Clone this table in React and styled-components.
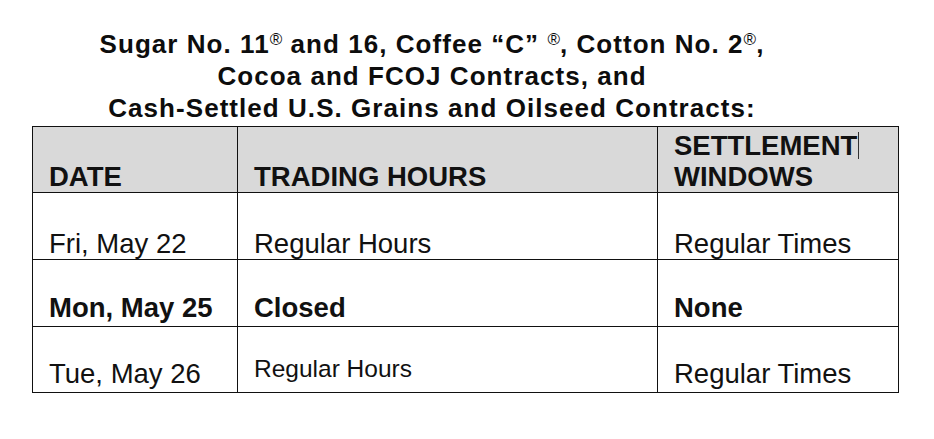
import styled, { createGlobalStyle } from "styled-components";

const GlobalStyle = createGlobalStyle`
  html, body {
    margin: 0;
    padding: 0;
    background: #ffffff;
  }
  body {
    font-family: "Liberation Sans", Arial, sans-serif;
    color: #111;
  }
`;

const Page = styled.div`
  width: 934px;
  height: 439px;
  padding-top: 28px;
  box-sizing: border-box;
  background: #fff;
`;

const Title = styled.h1`
  margin: 0 70px 2px 0;
  text-align: center;
  font-size: 26px;
  line-height: 32px;
  font-weight: 700;
  letter-spacing: 1.05px;
  color: #0d0d0d;
`;

const TitleLine = styled.div`
  white-space: nowrap;
`;

const Reg = styled.sup`
  font-size: 17px;
  font-weight: 400;
  line-height: 0;
  vertical-align: 0.5em;
  letter-spacing: 0;
  margin-left: ${(p) => (p.$gap ? "6px" : "0")};
`;

const Table = styled.table`
  margin-left: 32px;
  width: 866px;
  border-collapse: collapse;
  table-layout: fixed;
  font-size: 27.5px;
  color: #111;
`;

const HeadRow = styled.tr`
  height: 66px;
  background: #d9d9d9;
`;

const Row = styled.tr`
  height: ${(p) => p.$h}px;
`;

const HeadCell = styled.th`
  border: 1px solid #111;
  padding: 0 0 0 16px;
  text-align: left;
  vertical-align: bottom;
  font-weight: 700;
  line-height: 31px;
`;

const Cell = styled.td`
  border: 1px solid #111;
  padding: 0 0 ${(p) => p.$pb || 0}px 16px;
  vertical-align: bottom;
  font-weight: ${(p) => (p.$bold ? 700 : 400)};
  font-size: ${(p) => p.$size || 27.5}px;
  line-height: 31px;
  white-space: nowrap;
`;

const Caret = styled.span`
  display: inline-block;
  width: 1px;
  height: 27px;
  margin-left: 1px;
  background: #333;
  vertical-align: -4px;
`;

const rows = [
  { h: 67, date: "Fri, May 22", hours: "Regular Hours", windows: "Regular Times", pb: 0 },
  { h: 67, date: "Mon, May 25", hours: "Closed", windows: "None", pb: 3, bold: true },
  { h: 66, date: "Tue, May 26", hours: "Regular Hours", windows: "Regular Times", pb: 3, hoursSize: 24.5, hoursPb: 8 },
];

export default function App() {
  return (
    <Page>
      <GlobalStyle />
      <Title>
        <TitleLine>
          Sugar No. 11<Reg>®</Reg> and 16, Coffee “C” <Reg>®</Reg>, Cotton No. 2<Reg>®</Reg>,
        </TitleLine>
        <TitleLine>Cocoa and FCOJ Contracts, and</TitleLine>
        <TitleLine>Cash-Settled U.S. Grains and Oilseed Contracts:</TitleLine>
      </Title>
      <Table>
        <colgroup>
          <col style={{ width: 205 }} />
          <col style={{ width: 420 }} />
          <col style={{ width: 241 }} />
        </colgroup>
        <thead>
          <HeadRow>
            <HeadCell>DATE</HeadCell>
            <HeadCell>TRADING HOURS</HeadCell>
            <HeadCell>
              SETTLEMENT<Caret />
              <br />
              WINDOWS
            </HeadCell>
          </HeadRow>
        </thead>
        <tbody>
          {rows.map((r) => (
            <Row key={r.date} $h={r.h}>
              <Cell $bold={r.bold} $pb={r.pb}>{r.date}</Cell>
              <Cell $bold={r.bold} $pb={r.hoursPb ?? r.pb} $size={r.hoursSize}>
                {r.hours}
              </Cell>
              <Cell $bold={r.bold} $pb={r.pb}>{r.windows}</Cell>
            </Row>
          ))}
        </tbody>
      </Table>
    </Page>
  );
}
